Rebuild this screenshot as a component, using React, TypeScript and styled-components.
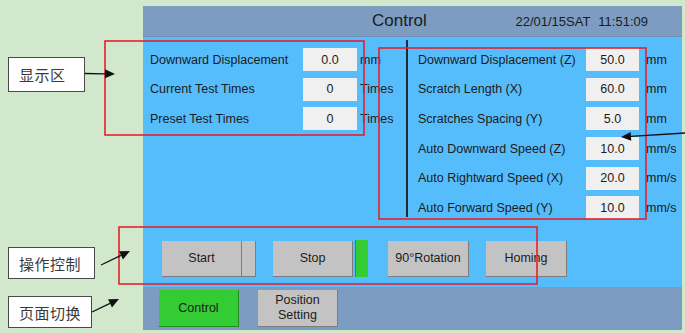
import React from 'react'
import styled, { createGlobalStyle } from 'styled-components'

const GlobalStyle = createGlobalStyle`
  html, body {
    margin: 0;
    padding: 0;
    background: #d2e8cd;
  }
  body {
    font-family: "Liberation Sans", Arial, sans-serif;
    color: #1b1b1b;
  }
`

const Page = styled.div`
  position: relative;
  display: flex;
  width: 685px;
  height: 333px;
  background: #d2e8cd;
  overflow: hidden;
`

const Gutter = styled.div`
  display: flex;
  flex-direction: column;
  width: 143px;
  flex-shrink: 0;
  padding: 57px 0 0 8px;
  box-sizing: border-box;
`

const Callout = styled.div<{ $w: number; $h: number; $top: number }>`
  display: flex;
  align-items: center;
  width: ${p => p.$w}px;
  height: ${p => p.$h}px;
  margin-top: ${p => p.$top}px;
  padding-left: 10px;
  box-sizing: border-box;
  background: #ffffff;
  border: 1.5px solid #4a4a4a;
  font-family: "Noto Sans CJK SC", sans-serif;
  font-size: 15px;
  color: #3a3a3a;
  letter-spacing: 0.5px;
`

const Screen = styled.div`
  display: flex;
  flex-direction: column;
  width: 539px;
  height: 324px;
  margin-top: 6px;
  background: #56bdfd;
`

const Header = styled.div`
  display: flex;
  align-items: center;
  height: 31px;
  padding-right: 34px;
  background: #7c9cc2;
  border-bottom: 1px solid #6f8db3;
  box-sizing: border-box;
`

const Title = styled.div`
  margin-left: 229px;
  font-size: 17px;
`

const Clock = styled.div`
  display: flex;
  margin-left: auto;
  gap: 8px;
  font-size: 13px;
`

const Body = styled.div`
  display: flex;
  flex-direction: column;
  flex: 1;
`

const Params = styled.div`
  display: flex;
  align-items: flex-start;
`

const ParamGrid = styled.div<{ $label: number; $input: number; $gap: number; $pad: number; $width?: number }>`
  display: grid;
  grid-template-columns: ${p => p.$label}px ${p => p.$input}px auto;
  grid-auto-rows: 23px;
  row-gap: 6.7px;
  column-gap: ${p => p.$gap}px;
  align-items: center;
  margin-top: 11px;
  padding-left: ${p => p.$pad}px;
  ${p => (p.$width ? `width: ${p.$width}px;` : '')}
  font-size: 12.5px;
`

const Label = styled.span`
  white-space: nowrap;
`

const Value = styled.div`
  display: flex;
  align-items: center;
  justify-content: center;
  height: 23px;
  background: #f0f0f0;
`

const Unit = styled.span`
  white-space: nowrap;
`

const Divider = styled.div`
  width: 1.5px;
  height: 177px;
  margin-top: 3px;
  background: #1f2a36;
`

const Actions = styled.div`
  display: flex;
  align-items: center;
  margin-top: 21px;
  padding-left: 19px;
`

const Button = styled.div<{ $w: number; $gapAfter?: number }>`
  display: flex;
  align-items: center;
  justify-content: center;
  width: ${p => p.$w}px;
  height: 36px;
  margin-right: ${p => p.$gapAfter ?? 0}px;
  box-sizing: border-box;
  background: #c3c3c3;
  border-right: 1.5px solid #7d7d7d;
  border-bottom: 1.5px solid #7d7d7d;
  font-size: 12.5px;
`

const Lamp = styled.div<{ $gapAfter: number }>`
  width: 13px;
  height: 37px;
  margin-right: ${p => p.$gapAfter}px;
  background: #33cc33;
  border-left: 1px solid #3c7d7d;
  box-sizing: border-box;
`

const TabBar = styled.div`
  display: flex;
  gap: 19px;
  height: 43px;
  padding: 3px 0 0 16px;
  box-sizing: border-box;
  background: #7c9cc2;
`

const Tab = styled.div<{ $active?: boolean }>`
  display: flex;
  align-items: center;
  justify-content: center;
  width: 80px;
  height: 37px;
  box-sizing: border-box;
  text-align: center;
  line-height: 15px;
  font-size: 12.5px;
  background: ${p => (p.$active ? '#33cc33' : '#c3c3c3')};
  border-right: 1.5px solid ${p => (p.$active ? '#238a23' : '#7d7d7d')};
  border-bottom: 1.5px solid ${p => (p.$active ? '#238a23' : '#7d7d7d')};
`

const Overlay = styled.svg`
  position: absolute;
  left: 0;
  top: 0;
  pointer-events: none;
`

type Pt = [number, number]

const Arrow: React.FC<{ from: Pt; tip: Pt }> = ({ from, tip }) => {
  const dx = tip[0] - from[0]
  const dy = tip[1] - from[1]
  const len = Math.hypot(dx, dy)
  const ux = dx / len
  const uy = dy / len
  const bx = tip[0] - ux * 10
  const by = tip[1] - uy * 10
  const head = [
    `${tip[0]},${tip[1]}`,
    `${bx - uy * 4.5},${by + ux * 4.5}`,
    `${bx + uy * 4.5},${by - ux * 4.5}`,
  ].join(' ')
  return (
    <g>
      <line x1={from[0]} y1={from[1]} x2={bx} y2={by} stroke="#111" strokeWidth={1.3} />
      <polygon points={head} fill="#111" />
    </g>
  )
}

const leftRows = [
  ['Downward Displacement', '0.0', 'mm'],
  ['Current Test Times', '0', 'Times'],
  ['Preset Test Times', '0', 'Times'],
]

const rightRows = [
  ['Downward Displacement (Z)', '50.0', 'mm'],
  ['Scratch Length (X)', '60.0', 'mm'],
  ['Scratches Spacing (Y)', '5.0', 'mm'],
  ['Auto Downward Speed (Z)', '10.0', 'mm/s'],
  ['Auto Rightward Speed (X)', '20.0', 'mm/s'],
  ['Auto Forward Speed (Y)', '10.0', 'mm/s'],
]

const App: React.FC = () => (
  <Page>
    <GlobalStyle />
    <Gutter>
      <Callout $w={77} $h={35} $top={0}>显示区</Callout>
      <Callout $w={87} $h={32} $top={155}>操作控制</Callout>
      <Callout $w={84} $h={32} $top={17}>页面切换</Callout>
    </Gutter>
    <Screen>
      <Header>
        <Title>Control</Title>
        <Clock>
          <span>22/01/15SAT</span>
          <span>11:51:09</span>
        </Clock>
      </Header>
      <Body>
        <Params>
          <ParamGrid $label={150} $input={54} $gap={3} $pad={7} $width={256}>
            {leftRows.map(([l, v, u]) => (
              <React.Fragment key={l}>
                <Label>{l}</Label>
                <Value>{v}</Value>
                <Unit>{u}</Unit>
              </React.Fragment>
            ))}
          </ParamGrid>
          <Divider />
          <ParamGrid $label={161} $input={53} $gap={7} $pad={10.5}>
            {rightRows.map(([l, v, u]) => (
              <React.Fragment key={l}>
                <Label>{l}</Label>
                <Value>{v}</Value>
                <Unit>{u}</Unit>
              </React.Fragment>
            ))}
          </ParamGrid>
        </Params>
        <Actions>
          <Button $w={80}>Start</Button>
          <Button $w={14} $gapAfter={17} />
          <Button $w={80} $gapAfter={2}>Stop</Button>
          <Lamp $gapAfter={20} />
          <Button $w={81} $gapAfter={17}>90°Rotation</Button>
          <Button $w={81}>Homing</Button>
        </Actions>
      </Body>
      <TabBar>
        <Tab $active>Control</Tab>
        <Tab>
          Position
          <br />
          Setting
        </Tab>
      </TabBar>
    </Screen>
    <Overlay width={685} height={333} viewBox="0 0 685 333">
      <g fill="none" stroke="#e3222b" strokeWidth={1.6}>
        <rect x={105} y={41} width={259} height={94} />
        <rect x={379} y={48} width={267} height={171} />
        <rect x={119} y={227} width={418} height={57} />
      </g>
      <Arrow from={[85, 73.5]} tip={[115, 74]} />
      <Arrow from={[101, 265]} tip={[130, 251]} />
      <Arrow from={[92, 312]} tip={[119, 299]} />
      <Arrow from={[685, 133]} tip={[621, 137]} />
    </Overlay>
  </Page>
)

export default App
